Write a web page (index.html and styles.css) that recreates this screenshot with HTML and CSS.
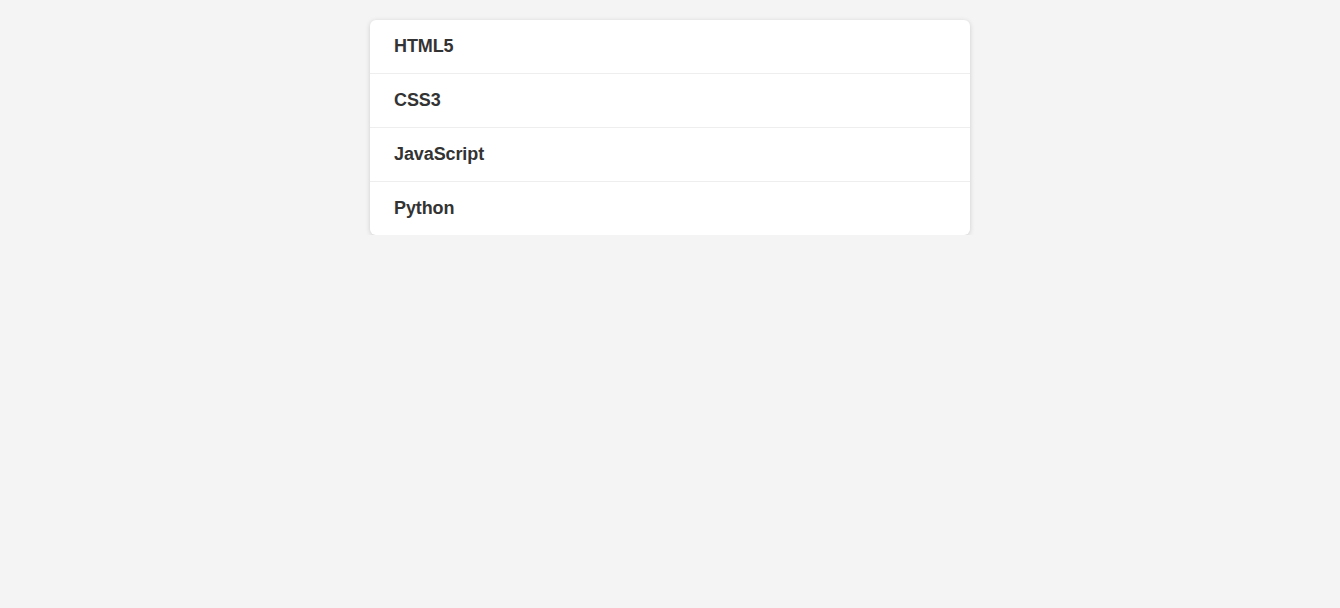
FILE: index.html
```html
<!DOCTYPE html>
<html>
<head>
<meta charset="utf-8">
<link rel="stylesheet" href="styles.css">
</head>
<body>
<ul class="list">
  <li class="item">HTML5</li>
  <li class="item">CSS3</li>
  <li class="item">JavaScript</li>
  <li class="item">Python</li>
</ul>
</body>
</html>
```
FILE: styles.css
```css
html, body {
  margin: 0;
  padding: 0;
  background: #f4f4f4;
  font-family: "Liberation Sans", Arial, sans-serif;
}
.list {
  list-style: none;
  margin: 20px auto 0;
  padding: 0;
  width: 600px;
  background: #fff;
  border-radius: 6px;
  box-shadow: 0 1px 5px rgba(0,0,0,0.16);
  overflow: hidden;
}
.item {
  padding: 16px 24px;
  line-height: 21px;
  font-size: 18px;
  font-weight: bold;
  letter-spacing: -0.1px;
  color: #333;
  border-bottom: 1px solid #eeeeee;
}
.item:last-child {
  border-bottom: none;
}
```
